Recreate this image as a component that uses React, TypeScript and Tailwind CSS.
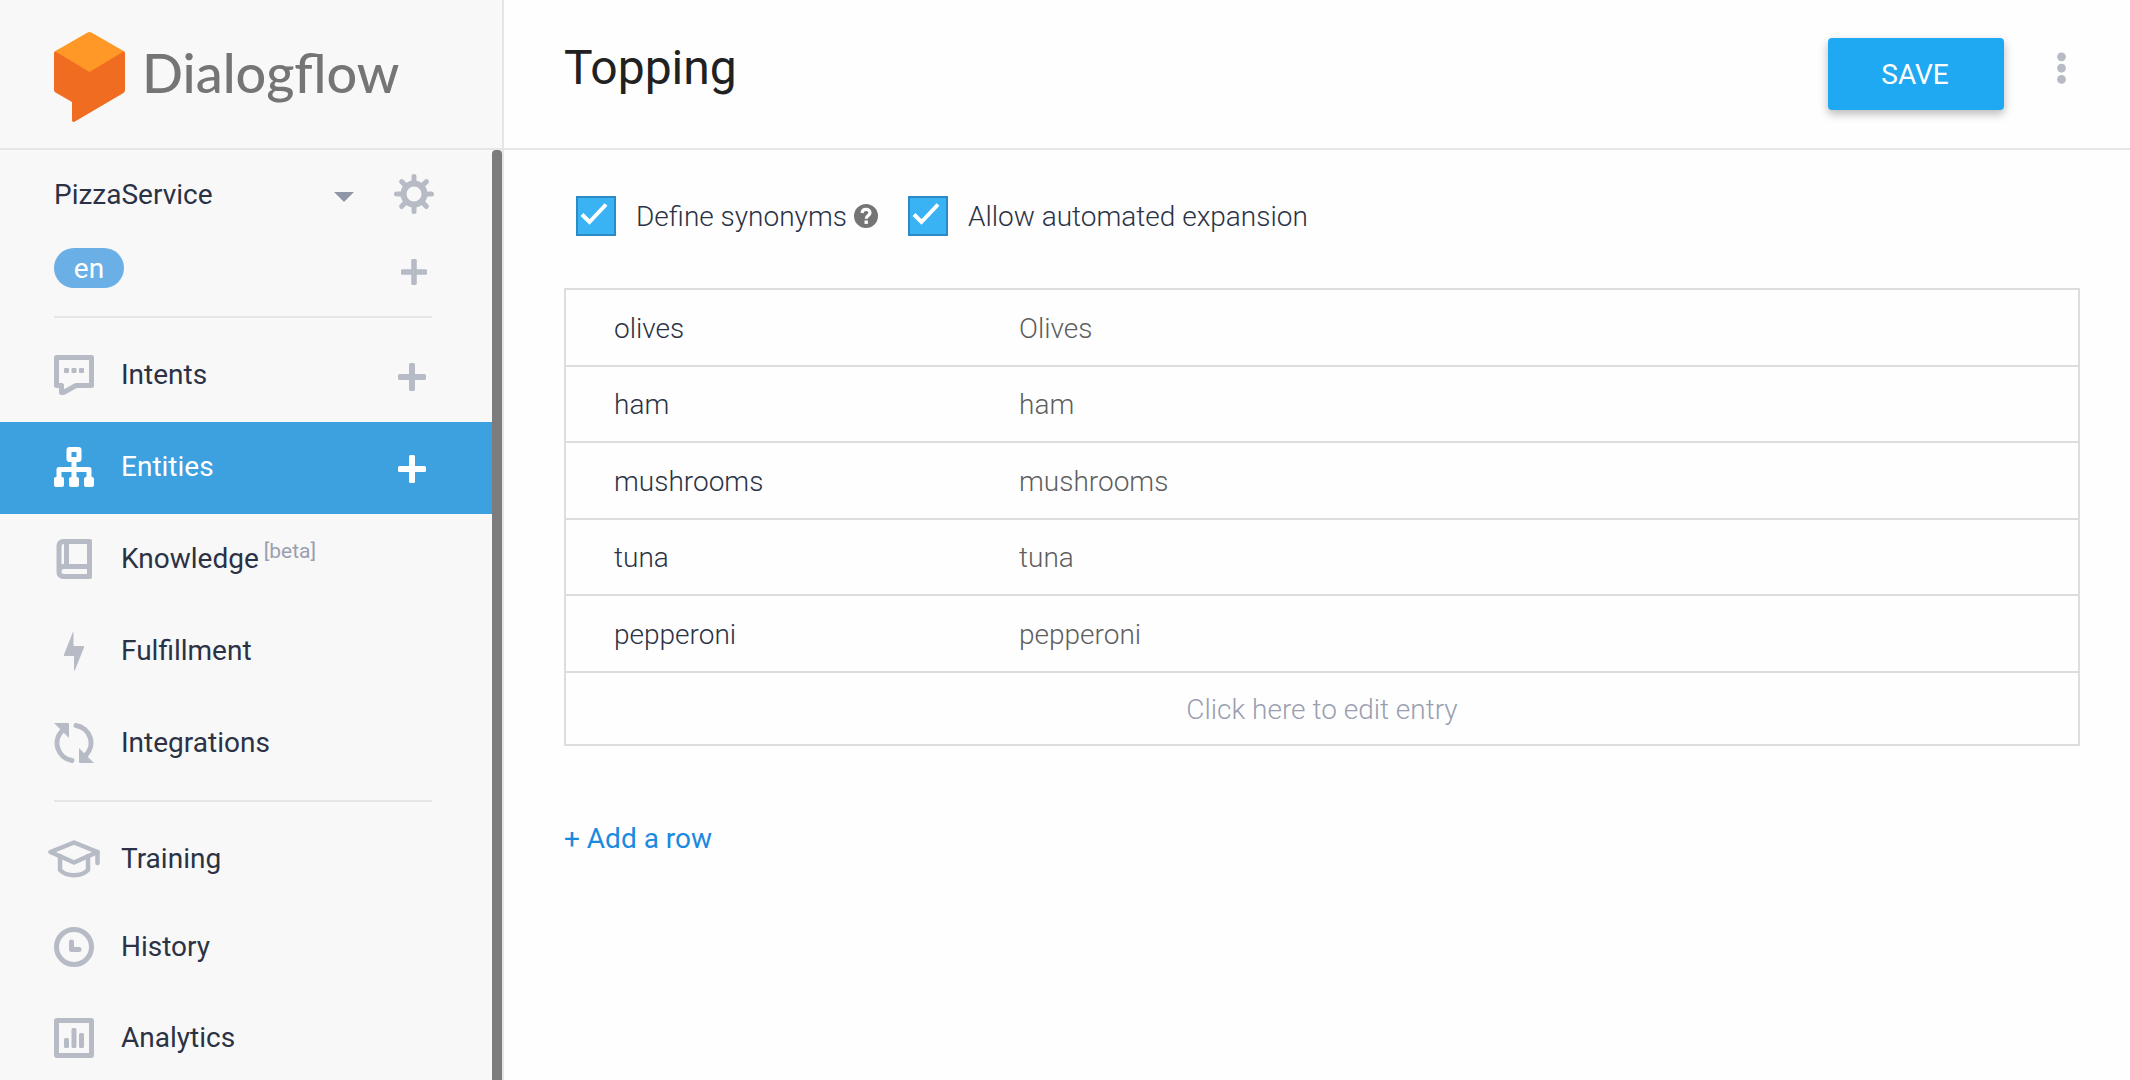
import type { ReactNode } from "react";

type IconProps = { children: ReactNode; className?: string; viewBox?: string };

function Icon({ children, className = "h-10 w-10", viewBox = "0 0 40 40" }: IconProps) {
  return (
    <svg viewBox={viewBox} className={`shrink-0 ${className}`} fill="none" aria-hidden="true">
      {children}
    </svg>
  );
}

function Plus({ className }: { className: string }) {
  return (
    <Icon viewBox="0 0 28 28" className={className}>
      <rect x="11" y="0" width="6" height="28" rx="1.5" fill="currentColor" />
      <rect x="0" y="11" width="28" height="6" rx="1.5" fill="currentColor" />
    </Icon>
  );
}

const icons: Record<string, ReactNode> = {
  Intents: (
    <Icon>
      <path d="M2.5 2.5H37.5V30.5H22L9.5 37.5H7.5V30.5H2.5Z" stroke="currentColor" strokeWidth="5" strokeLinejoin="round" />
      <rect x="10" y="13" width="5" height="5" rx="1" fill="currentColor" />
      <rect x="17.5" y="13" width="5" height="5" rx="1" fill="currentColor" />
      <rect x="25" y="13" width="5" height="5" rx="1" fill="currentColor" />
    </Icon>
  ),
  Entities: (
    <Icon>
      <rect x="15" y="2.5" width="10" height="10" rx="0.5" stroke="currentColor" strokeWidth="5" strokeLinejoin="round" />
      <path d="M20 13V34M5 34V22.5H35V34" stroke="currentColor" strokeWidth="5" strokeLinejoin="round" />
      <rect x="0" y="30" width="10" height="10" rx="2" fill="currentColor" />
      <rect x="15" y="30" width="10" height="10" rx="2" fill="currentColor" />
      <rect x="30" y="30" width="10" height="10" rx="2" fill="currentColor" />
    </Icon>
  ),
  Knowledge: (
    <Icon>
      <path
        fillRule="evenodd"
        fill="currentColor"
        d="M9 0H36a2 2 0 0 1 2 2V38a2 2 0 0 1-2 2H9a6.500 6.500 0 0 1-6.500-6.500V6.500A6.500 6.500 0 0 1 9 0ZM10 5C8 5 7.500 6 7.500 8V25H10ZM15 5V25H33V5ZM10 30a2.500 2.500 0 0 0 0 5H33V30Z"
      />
    </Icon>
  ),
  Fulfillment: (
    <Icon>
      <path
        d="M19.500 0.500V15H29c1 0 1.300 0.700 1 1.500L20.800 39.500H20V25H11c-1 0-1.300-0.700-1-1.500L19.200 0.500Z"
        fill="currentColor"
      />
    </Icon>
  ),
  Integrations: (
    <Icon>
      <path d="M8 8A17.500 17.500 0 0 0 18 37.500M32 32A17.500 17.500 0 0 0 22 2.500" stroke="currentColor" strokeWidth="5" strokeLinecap="round" />
      <path d="M0 0H14a1 1 0 0 1 1 1V15Z" fill="currentColor" />
      <path d="M40 40H26a1 1 0 0 1-1-1V25Z" fill="currentColor" />
    </Icon>
  ),
  Training: (
    <Icon viewBox="0 0 52 38" className="-mx-1.5 h-[38px] w-[52px]">
      <path d="M2.500 12L26 2.500L49.500 12L26 22.500Z" stroke="currentColor" strokeWidth="4.500" strokeLinejoin="round" />
      <path d="M12 16V30C19 37 33 37 40 30V16M49.500 12V23" stroke="currentColor" strokeWidth="4.500" strokeLinejoin="round" strokeLinecap="round" />
    </Icon>
  ),
  History: (
    <Icon>
      <circle cx="20" cy="20" r="17.500" stroke="currentColor" strokeWidth="5" />
      <path d="M17.500 15V22.500H25" stroke="currentColor" strokeWidth="5" strokeLinecap="round" strokeLinejoin="round" />
    </Icon>
  ),
  Analytics: (
    <Icon>
      <rect x="2.500" y="2.500" width="35" height="35" rx="0.500" stroke="currentColor" strokeWidth="5" strokeLinejoin="round" />
      <rect x="10" y="20" width="5" height="10" rx="1.500" fill="currentColor" />
      <rect x="17.500" y="10" width="5" height="20" rx="1.500" fill="currentColor" />
      <rect x="25" y="15" width="5" height="15" rx="1.500" fill="currentColor" />
    </Icon>
  ),
};

type NavItemProps = { label: string; active?: boolean; addable?: boolean; beta?: boolean; className?: string };

function NavItem({ label, active, addable, beta, className = "h-[92px] pb-0.5" }: NavItemProps) {
  return (
    <li
      className={`flex items-center pr-[66px] pl-[54px] ${className} ${
        active ? "bg-[#3da0df] text-white" : "text-[#2b3245]"
      }`}
    >
      <a href={`#${label.toLowerCase()}`} className="flex flex-1 items-center gap-[27px]">
        <span className={active ? "text-white" : "text-[#b7bbc5]"}>{icons[label]}</span>
        <span>
          {label}
          {beta && <sup className="-top-2.5 ml-[5px] align-baseline text-[21px] text-[#9a9fb0]">[beta]</sup>}
        </span>
      </a>
      {addable && (
        <button
          type="button"
          aria-label={`Add to ${label}`}
          className={`pt-1 ${active ? "text-white" : "text-[#b7bbc5]"}`}
        >
          <Plus className="h-7 w-7" />
        </button>
      )}
    </li>
  );
}

function Logo() {
  return (
    <a href="#home" className="flex items-center gap-[17px]" aria-label="Dialogflow">
      <svg viewBox="0 0 71 91" className="h-[91px] w-[71px] shrink-0" aria-hidden="true">
        <path
          d="M0 21.500C0 20 0.600 19.600 1.500 19L35.500 10L69.500 19C70.500 19.600 71 20.500 71 21.500V58C71 59.500 70 60.700 69 61.300L20.500 89.700C19.500 90.200 18 89.800 18 88.300V70L2 60.800C0.700 60 0 59 0 57.500Z"
          fill="#ef6c20"
        />
        <path d="M33.200 0.700C34.600-0.200 36.400-0.200 37.800 0.700L70 19.300L35.500 40L1 19.300Z" fill="#ff9826" />
      </svg>
      <span className="pb-2.5 font-[Lato] text-[54px] leading-none font-medium text-[#757575]">Dialogflow</span>
    </a>
  );
}

function Gear() {
  const teeth = [0, 45, 90, 135, 180, 225, 270, 315];
  return (
    <Icon>
      <circle cx="20" cy="20" r="10.500" stroke="currentColor" strokeWidth="6" />
      {teeth.map((angle) => (
        <path key={angle} d="M20 2.500V9" stroke="currentColor" strokeWidth="5" strokeLinecap="round" transform={`rotate(${angle} 20 20)`} />
      ))}
    </Icon>
  );
}

function Sidebar() {
  return (
    <aside className="flex w-[504px] shrink-0 flex-col border-r-2 border-[#e6e6e6] bg-[#f8f8f8]">
      <div className="h-[150px] shrink-0 border-b-2 border-[#e6e6e6] pt-8 pl-[54px]">
        <Logo />
      </div>
      <div className="flex flex-1">
        <nav className="flex-1" aria-label="Agent">
          <div className="flex items-center pt-6 pr-[58px] pl-[54px]">
            <button type="button" className="flex flex-1 items-center justify-between pr-10 text-[#2b3245]">
              <span className="pt-0.5">PizzaService</span>
              <svg viewBox="0 0 20 10" className="mt-1.5 h-2.5 w-5" aria-hidden="true">
                <path d="M0 0H20L10 10Z" fill="#9096a8" />
              </svg>
            </button>
            <button type="button" aria-label="Agent settings" className="text-[#b7bbc5]">
              <Gear />
            </button>
          </div>
          <div className="flex items-center justify-between pt-[34px] pr-[65px] pl-[54px]">
            <button type="button" className="h-10 w-[70px] rounded-full bg-[#6ab0e6] pt-0.5 text-white">
              en
            </button>
            <button type="button" aria-label="Add language" className="pt-2 text-[#b7bbc5]">
              <Plus className="h-[26px] w-[26px]" />
            </button>
          </div>
          <hr className="mt-7 mr-[60px] mb-3 ml-[54px] border-t-2 border-[#e6e6e6]" />
          <ul>
            <NavItem label="Intents" addable />
            <NavItem label="Entities" active addable />
            <NavItem label="Knowledge" beta />
            <NavItem label="Fulfillment" />
            <NavItem label="Integrations" />
          </ul>
          <hr className="mt-2.5 mr-[60px] mb-4 ml-[54px] border-t-2 border-[#e6e6e6]" />
          <ul>
            <NavItem label="Training" className="h-[84px] pb-0.5" />
            <NavItem label="History" />
            <NavItem label="Analytics" className="h-[84px] pt-1" />
          </ul>
        </nav>
        <div className="w-2.5 shrink-0 rounded-t-[4px] bg-[#7c7c7c]" />
      </div>
    </aside>
  );
}

function Option({ id, label }: { id: string; label: string }) {
  return (
    <div className="flex items-center gap-5">
      <span className="grid h-10 w-10 shrink-0">
        <input
          id={id}
          type="checkbox"
          defaultChecked
          className="peer col-start-1 row-start-1 appearance-none border-2 border-[#2b8cc4] checked:bg-[#3ab3f5]"
        />
        <svg
          viewBox="0 0 40 40"
          className="pointer-events-none invisible col-start-1 row-start-1 peer-checked:visible"
          fill="none"
          aria-hidden="true"
        >
          <path d="M6 18.500L13.500 26L30 8.500" stroke="#fff" strokeWidth="4" />
        </svg>
      </span>
      <label htmlFor={id} className="pt-0.5">
        {label}
      </label>
    </div>
  );
}

const entries = [
  ["olives", "Olives"],
  ["ham", "ham"],
  ["mushrooms", "mushrooms"],
  ["tuna", "tuna"],
  ["pepperoni", "pepperoni"],
];

export default function App() {
  return (
    <div className="flex min-h-screen bg-[#fefefe] font-[Roboto,sans-serif] text-[28px] leading-8">
      <Sidebar />
      <main className="min-w-0 flex-1">
        <header className="flex h-[150px] items-start border-b-2 border-[#e6e6e6] pr-16 pl-[60px]">
          <h1 className="flex-1 pt-10 text-[48px] leading-14 text-[#212121]">Topping</h1>
          <button
            type="button"
            className="mt-[38px] h-[72px] w-44 rounded-[4px] bg-[#1ea9f2] pt-0.5 pr-0.5 text-white shadow-[0_4px_10px_rgba(0,0,0,0.28)]"
          >
            SAVE
          </button>
          <button type="button" aria-label="More options" className="mt-[52px] ml-[53px] text-[#b7bbc5]">
            <Icon viewBox="0 0 9 32" className="h-8 w-[9px]">
              <circle cx="4.500" cy="4.800" r="4.400" fill="currentColor" />
              <circle cx="4.500" cy="16.100" r="4.400" fill="currentColor" />
              <circle cx="4.500" cy="27.400" r="4.400" fill="currentColor" />
            </Icon>
          </button>
        </header>
        <div className="pt-[46px] pr-[50px] pl-[60px]">
          <div className="flex items-center pl-3 font-light text-[#2b3245]">
            <Option id="define-synonyms" label="Define synonyms" />
            <button type="button" aria-label="About synonyms" className="mr-[30px] ml-[7px]">
              <Icon viewBox="0 0 24 24" className="h-6 w-6">
                <circle cx="12" cy="12" r="12" fill="#757575" />
                <path d="M8 9C8.500 3.800 16 4.500 16 8.700C16 11.500 12.200 11.500 12.200 14.800" stroke="#fff" strokeWidth="3.200" />
                <rect x="10.500" y="16.500" width="3.400" height="3.400" fill="#fff" />
              </Icon>
            </button>
            <Option id="automated-expansion" label="Allow automated expansion" />
          </div>
          <table className="mt-[52px] w-full border-collapse border-2 border-[#dddddd] font-light">
            <tbody>
              {entries.map(([value, synonym]) => (
                <tr key={value} className="border-b-2 border-[#dddddd] odd:h-[77px] even:h-[76px]">
                  <td className="w-[454px] pt-0.5 pl-12 text-[#2b3245]">{value}</td>
                  <td className="pt-0.5 text-[#5f5f5f]">{synonym}</td>
                </tr>
              ))}
              <tr className="h-[73px]">
                <td colSpan={2} className="pt-0.5 text-center text-[#9a9fb0]">
                  <button type="button">Click here to edit entry</button>
                </td>
              </tr>
            </tbody>
          </table>
          <button type="button" className="mt-[77px] text-[#1a8ae0]">
            + Add a row
          </button>
        </div>
      </main>
    </div>
  );
}
